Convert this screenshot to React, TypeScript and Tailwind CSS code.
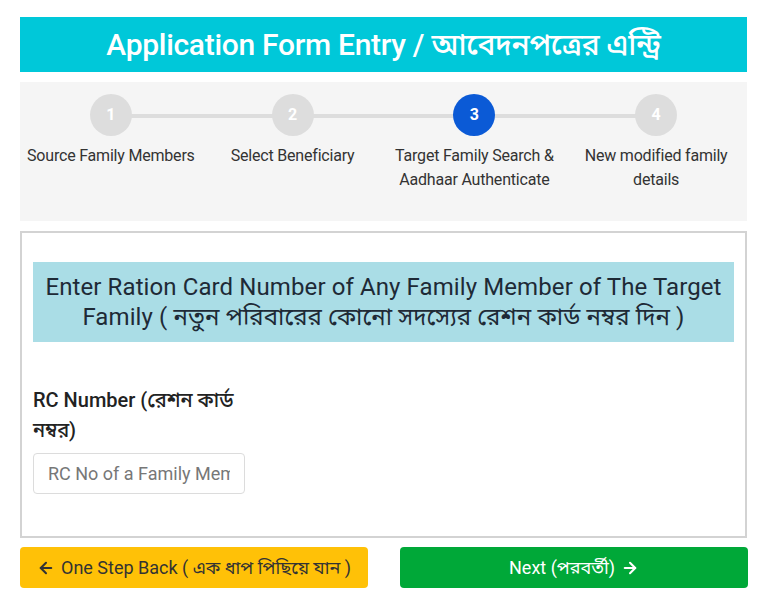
import { ArrowLeft, ArrowRight } from 'lucide-react';

const steps = [
  { n: 1, label: 'Source Family Members' },
  { n: 2, label: 'Select Beneficiary' },
  { n: 3, label: 'Target Family Search & Aadhaar Authenticate' },
  { n: 4, label: 'New modified family details' },
];

const active = 3;

export default function App() {
  return (
    <div
      className="w-[775px] h-[603px] bg-white pt-[17px] px-[20px] text-[#333]"
      style={{ fontFamily: 'Roboto, "Noto Sans Bengali", "Noto Sans", sans-serif' }}
    >
      <div className="w-[727px] h-[55px] bg-[#00c8d9] flex items-center justify-center">
        <h1 className="text-white text-[30px] font-medium tracking-[-0.3px]">
          Application Form Entry / আবেদনপত্রের এন্ট্রি
        </h1>
      </div>

      <div className="w-[727px] h-[139px] mt-[10px] bg-[#f5f5f5] grid grid-cols-4 pt-[12px]">
        {steps.map((s, i) => (
          <div key={s.n} className="relative flex flex-col items-center">
            {i < steps.length - 1 && (
              <div className="absolute top-[20px] left-1/2 w-full h-[4px] bg-[#dddddd]" />
            )}
            <div
              className={`relative z-10 w-[42px] h-[42px] rounded-full flex items-center justify-center text-white text-[16px] font-bold ${
                s.n === active ? 'bg-[#0b5ad6]' : 'bg-[#dddddd]'
              }`}
            >
              {s.n}
            </div>
            <div className="mt-[8px] text-[16px] leading-[24px] text-center text-[#333] tracking-[-0.2px]">
              {s.label}
            </div>
          </div>
        ))}
      </div>

      <div className="w-[727px] h-[307px] mt-[10px] border-2 border-[#d3d3d3] px-[11px] pt-[29px]">
        <div className="bg-[#aadde6] px-[10px] py-[10px] text-center text-[24px] leading-[30px] text-[#1e2a36] tracking-[0.1px]">
          Enter Ration Card Number of Any Family Member of The Target Family ( নতুন পরিবারের কোনো সদস্যের রেশন কার্ড নম্বর দিন )
        </div>

        <div className="w-[212px] mt-[43px]">
          <label className="block text-[20px] leading-[30px] font-medium text-[#222]">
            RC Number (রেশন কার্ড নম্বর)
          </label>
          <input
            type="text"
            placeholder="RC No of a Family Member"
            className="mt-[8px] w-[212px] h-[41px] border border-[#dcdcdc] rounded-[4px] px-[14px] text-[18px] placeholder:text-[#777] outline-none"
          />
        </div>
      </div>

      <div className="w-[728px] mt-[9px] flex justify-between">
        <button className="w-[348px] h-[41px] rounded-[4px] bg-[#ffc107] text-[#333] text-[18px] flex items-center justify-center gap-[6px]">
          <ArrowLeft size={18} strokeWidth={2.75} />
          One Step Back ( এক ধাপ পিছিয়ে যান )
        </button>
        <button className="w-[348px] h-[41px] rounded-[4px] bg-[#00a838] text-white text-[18px] flex items-center justify-center gap-[6px]">
          Next (পরবর্তী)
          <ArrowRight size={18} strokeWidth={2.75} />
        </button>
      </div>
    </div>
  );
}
